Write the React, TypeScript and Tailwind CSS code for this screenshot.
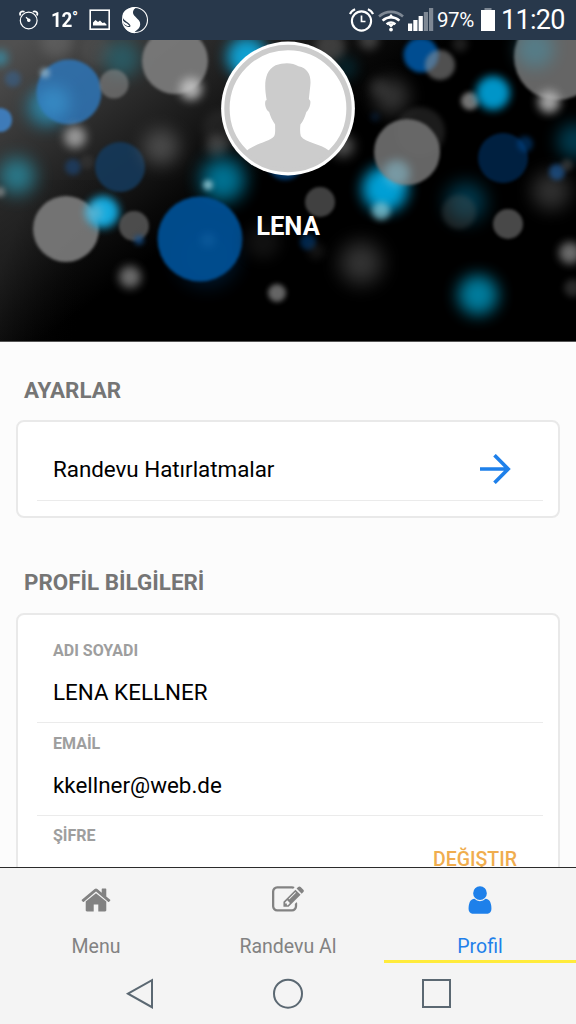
import React from "react";

type Dot = [x: number, y: number, r: number, color: string, opacity: number, blur: number];

const dots: Dot[] = [
  [0, 18, 8, "#2f9fc0", 0.6, 4],
  [13, 39, 8, "#2f6fb0", 0.4, 2.5],
  [46, 68, 19, "#1f9fc8", 0.55, 8],
  [57, 2, 16, "#808080", 0.35, 6],
  [96, 10, 16, "#606060", 0.3, 4],
  [122, 19, 18, "#23707f", 0.6, 8],
  [69, 52, 32.5, "#2f74b4", 0.88, 1.6],
  [54, 62, 16, "#3f9fd8", 0.5, 8],
  [45, 33, 5, "#8fb0c4", 0.8, 2.5],
  [114, 44, 14.5, "#888888", 0.6, 1.8],
  [0, 80, 12, "#3f7fc0", 0.95, 1.8],
  [75, 97, 11, "#a8a8a8", 0.85, 5],
  [73, 127, 8, "#1d3f66", 0.8, 2.5],
  [87, 122, 7, "#444444", 0.4, 2.5],
  [17, 136, 18, "#2a8fa5", 0.8, 9],
  [0, 152, 5, "#a0a0a0", 0.6, 2.5],
  [120, 127, 25, "#15395a", 0.9, 1.6],
  [161, 107, 18, "#666666", 0.65, 9],
  [175, 21, 33, "#7c7c7c", 0.92, 1.6],
  [191, 49, 11, "#c8c8c8", 0.85, 5],
  [247, 17, 20, "#0eaee4", 0.9, 7],
  [222, 88, 19, "#444444", 0.3, 4],
  [217, 106, 11, "#666666", 0.5, 5],
  [223, 140, 22, "#00789a", 0.95, 9],
  [208, 145, 5, "#8fc4d0", 0.85, 2.5],
  [66, 189, 33, "#777777", 0.96, 1.6],
  [103, 172, 16, "#14aee4", 0.97, 4.2],
  [94, 173, 9, "#8abccd", 0.5, 4],
  [134, 186, 15, "#585858", 0.85, 1.8],
  [139, 200, 5, "#17508a", 0.75, 2.5],
  [130, 237, 11, "#777777", 0.9, 5],
  [207, 216, 30, "#00396b", 0.45, 10],
  [200, 199, 42.5, "#004f93", 0.95, 1.6],
  [208, 200, 7, "#1766a7", 0.5, 4],
  [277, 253, 9, "#707070", 0.9, 2.6],
  [263, 202, 17, "#222222", 0.5, 7],
  [330, 7, 15, "#555555", 0.65, 4],
  [346, 28, 12, "#00536a", 0.3, 6],
  [369, 0, 10, "#666666", 0.55, 4],
  [285, 122, 18, "#004a90", 0.7, 2],
  [391, 56, 18, "#505050", 0.65, 9],
  [378, 47, 9, "#666666", 0.25, 5],
  [421, 15, 17.5, "#004f94", 0.98, 2],
  [440, 25, 15, "#999999", 0.52, 2.2],
  [460, 4, 8, "#555555", 0.35, 3.5],
  [470, 61, 9, "#888888", 0.85, 2.8],
  [493, 53, 17, "#00a2d9", 0.92, 4.4],
  [557, 17, 43, "#6c6c6c", 0.94, 1.8],
  [535, 9, 19, "#3f9fbb", 0.4, 8],
  [549, 62, 11, "#bcbcbc", 0.85, 5],
  [343, 106, 11, "#888888", 0.6, 6],
  [375, 77, 5, "#0a3464", 0.3, 2.5],
  [420, 92, 25, "#383838", 0.5, 2.5],
  [385, 149, 23, "#00a5dc", 0.97, 7],
  [407, 112, 33, "#6d6d6d", 0.93, 1.6],
  [397, 133, 13, "#8fd0e4", 0.45, 5],
  [381, 171, 9, "#8cd0de", 0.7, 3],
  [320, 162, 15, "#4c4c4c", 0.85, 1.8],
  [503, 118, 25, "#00264c", 0.85, 1.8],
  [525, 104, 8, "#004b94", 0.5, 2.8],
  [575, 101, 18, "#007095", 0.5, 8],
  [551, 151, 19, "#4a4a4a", 0.65, 9],
  [557, 132, 8, "#1f5b9b", 0.7, 2.8],
  [567, 125, 6, "#555555", 0.5, 2.5],
  [466, 162, 20, "#005674", 0.65, 9],
  [459, 172, 17, "#454b4c", 0.4, 2.4],
  [508, 184, 15, "#4c4c4c", 0.95, 1.8],
  [308, 202, 8, "#003e7b", 0.6, 2.8],
  [316, 211, 8, "#444444", 0.3, 4],
  [361, 223, 21, "#515151", 0.65, 10],
  [478, 255, 20, "#0092b8", 0.85, 8],
  [570, 213, 11, "#7c7c7c", 0.85, 4.5],
  [573, 248, 9, "#444444", 0.6, 3],
];

function Bokeh() {
  return (
    <svg className="absolute inset-0 h-full w-full" viewBox="0 0 576 302" aria-hidden="true">
      <defs>
        <linearGradient id="haze" gradientUnits="userSpaceOnUse" x1="20" y1="0" x2="170" y2="205">
          <stop offset="0" stopColor="#505050" />
          <stop offset="0.45" stopColor="#292929" />
          <stop offset="0.85" stopColor="#090909" />
          <stop offset="1" stopColor="#000000" />
        </linearGradient>
        <linearGradient id="corner" gradientUnits="userSpaceOnUse" x1="0" y1="230" x2="90" y2="262">
          <stop offset="0" stopColor="#262626" />
          <stop offset="1" stopColor="#000000" stopOpacity="0" />
        </linearGradient>
      </defs>
      <rect width="576" height="302" fill="url(#haze)" />
      <rect y="140" width="120" height="162" fill="url(#corner)" opacity="0.5" />
      {dots.map(([x, y, r, color, opacity, blur], i) => (
        <circle key={i} cx={x} cy={y} r={r} fill={color} opacity={opacity} style={{ filter: `blur(${blur}px)` }} />
      ))}
      <rect y="301" width="576" height="1" fill="#555555" />
    </svg>
  );
}

function StatusBar() {
  return (
    <div className="flex h-10 shrink-0 items-center bg-[#28384b] text-white">
      <svg className="ml-[18px] h-[22px] w-[22px]" viewBox="0 0 22 22" fill="none" stroke="white" strokeWidth="1.2">
        <circle cx="10.7" cy="11.5" r="8.4" />
        <path d="M2.6 6.6C.8 4 3.6 1.3 6.5 2.8M18.8 6.6c1.8-2.6-1-5.3-3.9-3.8" strokeWidth="1.7" />
        <path d="M8 8.3l3 2.7" />
        <circle cx="10.8" cy="11.3" r="1.2" fill="white" />
      </svg>
      <span className="ml-[11px] flex w-7 text-[21px] leading-10 font-bold tracking-[-0.5px]">
        <span className="inline-block origin-left scale-x-[0.9]">12</span>
        <span className="-ml-[2px] text-[16px] leading-[36px] font-medium">°</span>
      </span>
      <svg className="ml-2.5 h-[22px] w-[22px]" viewBox="0 0 22 22">
        <rect x="1.2" y="1.2" width="19" height="19" fill="none" stroke="white" strokeWidth="1.6" />
        <path d="M4 16.5v-3l2.5-2.500 2.500 2 2-1.500 2.500 2.500 2-.5 2 2v1z" fill="white" />
      </svg>
      <svg className="ml-[10px] h-7 w-7" viewBox="0 0 28 28">
        <circle cx="14" cy="14" r="12.5" fill="none" stroke="white" strokeWidth="1.1" />
        <path
          d="M16 1C8 .5 2 4.5 1.5 9.500C1.200 13 5 15 8 17.500C10.500 19.800 9.500 21.500 7.500 21C5 20.500 3 19 2.200 17.500C4 23.500 8.500 27.300 14 27.200C13 26 14 25.500 16 24C18.500 22 19.700 19.500 19 16.500C18.200 13 12.500 10.500 12 7C11.700 4.500 13.500 2.300 16 1Z"
          fill="white"
        />
        <path d="M1.200 13.500C2 16 6 16.500 8.500 20C5 20.500 1.500 17.500 1.200 13.500Z" fill="white" />
      </svg>

      <svg className="ml-auto h-7 w-[26px]" viewBox="0 0 26 28" fill="none" stroke="white">
        <circle cx="12.5" cy="15" r="9.6" strokeWidth="2.1" />
        <path d="M12.5 9.500v6h4" strokeWidth="1.7" />
        <path d="M1 8.200C1.800 6 3.800 4.100 6.100 3.200M24 8.200c-.8-2.200-2.800-4.100-5.100-5" strokeWidth="2.1" />
      </svg>
      <svg className="ml-[3px] h-7 w-[26px]" viewBox="0 0 26 28" fill="none" stroke="white" strokeWidth="2.6">
        <path d="M1 10.500C8 4.300 18 4.300 25 10.500" stroke="#7e8894" />
        <path d="M4.600 14.600c4.900-4.500 11.900-4.500 16.800 0M8.600 18.300c2.700-2.200 6.100-2.200 8.800 0" />
        <path d="M13 8l3.800 4.300h-7.600zM9.500 18h7l-3.500 3.500z" fill="white" stroke="none" />
        <circle cx="13" cy="23.600" r="1.900" fill="white" stroke="none" />
      </svg>
      <svg className="ml-1 h-7 w-[26px]" viewBox="0 0 26 28" fill="white">
        <path d="M0 17.500h4.200V25H0zM5.300 14h4.200v11H5.300zM10.600 10h4.200v15h-4.200z" />
        <path d="M15.800 6H20v19h-4.200zM21 2h4.200v23H21z" fill="#7e8894" />
      </svg>
      <span className="ml-[3px] w-[39px] text-[20.5px] leading-[42px] tracking-[-0.4px] whitespace-nowrap">97%</span>
      <svg className="ml-1 h-7 w-4" viewBox="0 0 16 28" fill="white">
        <path d="M4.500 2h7v3h-7z" fill="#7e8894" />
        <path d="M1 4h14v21H1z" />
      </svg>
      <span className="mr-[11px] ml-[5px] w-[64px] text-[27px] leading-[42px] tracking-[-0.7px]">11:20</span>
    </div>
  );
}

function Avatar() {
  return (
    <svg className="relative mt-[1px] h-[135px] w-[134px]" viewBox="0 0 135 135" aria-label="Avatar">
      <defs>
        <clipPath id="face">
          <circle cx="67.5" cy="67.5" r="60" />
        </clipPath>
      </defs>
      <circle cx="67.5" cy="67.5" r="67.4" fill="white" />
      <circle cx="67.5" cy="67.5" r="61.5" fill="white" stroke="#cccccc" strokeWidth="5.4" />
      <path
        clipPath="url(#face)"
        fill="#cccccc"
        d="M26 110C34 103 49 101 53.500 95.500C55 93 54.500 88 54.500 83.500C52 80 49.500 75 48.500 71C45 69 43.500 62 45 59.500L46 59C43.500 45 43 30 55 24C63 21 72 21 78 25C88 27 91 35 90 44L88.500 58L90 60C90.500 64 88.500 69 86 71C84.500 76 83 80 80 83.500C79.500 88 79.500 92 80.500 95.500C85 102 100 103 109 110L100 135H35Z"
      />
    </svg>
  );
}

function SectionTitle({ children }: { children: React.ReactNode }) {
  return <h2 className="h-7 pl-2 text-[22.4px] leading-7 font-bold text-[#757575]">{children}</h2>;
}

function Field({ label, value }: { label: string; value: string }) {
  return (
    <div className="h-[93px] border-b border-[#ebebeb] px-4 pt-[11px]">
      <div className="h-5 text-[16px] leading-5 font-bold text-[#9e9e9e]">{label}</div>
      <div className="mt-[17px] h-7 text-[22.4px] leading-7 text-black">{value}</div>
    </div>
  );
}

const paths = {
  home: "M1472 992v480q0 26-19 45t-45 19h-384v-384h-256v384h-384q-26 0-45-19t-19-45v-480q0-1 .5-3t.5-3l575-474 575 474q1 2 1 6zm223-69l-62 74q-8 9-21 11h-3q-13 0-21-7l-692-577-692 577q-12 8-24 7-13-2-21-11l-62-74q-8-10-7-23.500t11-21.500l719-599q32-26 76-26t76 26l244 204v-195q0-14 9-23t23-9h192q14 0 23 9t9 23v408l219 182q10 8 11 21.500t-7 23.500z",
  edit: "M888 1184l116-116-152-152-116 116v56h96v96h56zm440-720q-16-16-33 1l-350 350q-17 17-1 33t33-1l350-350q17-17 1-33zm80 594v190q0 119-84.500 203.500t-203.500 84.500h-832q-119 0-203.500-84.500t-84.500-203.500v-832q0-119 84.500-203.500t203.500-84.500h832q63 0 117 25 15 7 18 23 3 17-9 29l-49 49q-14 14-32 8-23-6-45-6h-832q-66 0-113 47t-47 113v832q0 66 47 113t113 47h832q66 0 113-47t47-113v-126q0-13 9-22l64-64q15-15 35-7t20 29zm-96-738l288 288-672 672h-288v-288zm444 132l-92 92-288-288 92-92q28-28 68-28t68 28l152 152q28 28 28 68t-28 68z",
  user: "M1536 1399q0 109-62.500 187t-150.500 78h-854q-88 0-150.500-78t-62.500-187q0-85 8.500-160.500t31.500-152 58.500-131 94-89 134.500-34.500q131 128 313 128t313-128q76 0 134.500 34.500t94 89 58.500 131 31.500 152 8.500 160.500zm-256-887q0 159-112.500 271.500t-271.500 112.500-271.500-112.500-112.500-271.500 112.500-271.500 271.500-112.500 271.500 112.500 112.500 271.500z",
};

function Tab({ label, icon, active = false }: { label: string; icon: keyof typeof paths; active?: boolean }) {
  return (
    <button
      className={
        active
          ? "flex flex-col items-center border-b-[3px] border-[#ffeb3b] pt-4 text-[#1e80ea]"
          : "flex flex-col items-center border-b-[3px] border-transparent pt-4 text-[#828282]"
      }
    >
      <svg className="h-8 w-8 shrink-0" viewBox="0 0 1792 1792" fill="currentColor">
        <path d={paths[icon]} />
      </svg>
      <span className="mt-[19px] text-[19.5px] leading-6">{label}</span>
    </button>
  );
}

export default function App() {
  return (
    <div className="flex h-[1024px] w-[576px] flex-col overflow-hidden bg-[#fcfcfc] font-['Roboto',sans-serif]">
      <StatusBar />
      <header className="relative flex h-[302px] shrink-0 flex-col items-center overflow-hidden bg-black">
        <Bokeh />
        <Avatar />
        <h1 className="relative mt-[34px] text-[25.6px] leading-8 font-bold text-white">LENA</h1>
      </header>

      <main className="min-h-0 flex-1 overflow-hidden px-4 pt-[34px]">
        <SectionTitle>AYARLAR</SectionTitle>
        <section className="mt-4 h-[98px] rounded-lg border-2 border-[#e9e9e9] bg-white pr-[15px] pl-[19px]">
          <div className="flex h-[79px] items-start justify-between border-b border-[#ebebeb] pt-8 pr-8 pl-4">
            <span className="text-[22.4px] leading-[30px] tracking-[-0.03px] text-black">Randevu Hatırlatmalar</span>
            <svg className="h-[30px] w-[31px]" viewBox="0 0 31 30" fill="none" stroke="#1e80ea" strokeWidth="3.6">
              <path d="M0 15H28M14.500 1.200L28.200 15L14.500 28.800" />
            </svg>
          </div>
        </section>

        <div className="mt-[50px]">
          <SectionTitle>PROFİL BİLGİLERİ</SectionTitle>
        </div>
        <section className="mt-[17px] h-[330px] rounded-lg border-2 border-[#e9e9e9] bg-white pt-[15px] pr-[15px] pl-[19px]">
          <Field label="ADI SOYADI" value="LENA KELLNER" />
          <Field label="EMAİL" value="kkellner@web.de" />
          <div className="px-4 pt-[10px]">
            <div className="h-5 text-[16px] leading-5 font-bold text-[#9e9e9e]">ŞİFRE</div>
            <div className="pr-[10px] text-right text-[19.5px] leading-7 font-medium text-[#f0ad4e]">DEĞIŞTIR</div>
          </div>
        </section>
      </main>

      <nav className="grid h-24 shrink-0 grid-cols-3 border-t border-[#2b2b2b] bg-[#f4f4f4]">
        <Tab label="Menu" icon="home" />
        <Tab label="Randevu Al" icon="edit" />
        <Tab label="Profil" icon="user" active />
      </nav>

      <div className="flex h-[61px] shrink-0 items-start justify-between bg-[#f4f4f4] pt-[15px] pr-[124px] pl-[125px]">
        <svg className="h-8 w-[30px]" viewBox="0 0 30 32" fill="none" stroke="#5b6872" strokeWidth="2">
          <path d="M3 15.700L27 2.200V29.200Z" />
        </svg>
        <svg className="h-8 w-8" viewBox="0 0 32 32" fill="none" stroke="#5b6872" strokeWidth="2">
          <circle cx="16" cy="15.700" r="14" />
        </svg>
        <svg className="h-8 w-8" viewBox="0 0 32 32" fill="none" stroke="#5b6872" strokeWidth="2">
          <path d="M3 2H30V29H3Z" />
        </svg>
      </div>
    </div>
  );
}
